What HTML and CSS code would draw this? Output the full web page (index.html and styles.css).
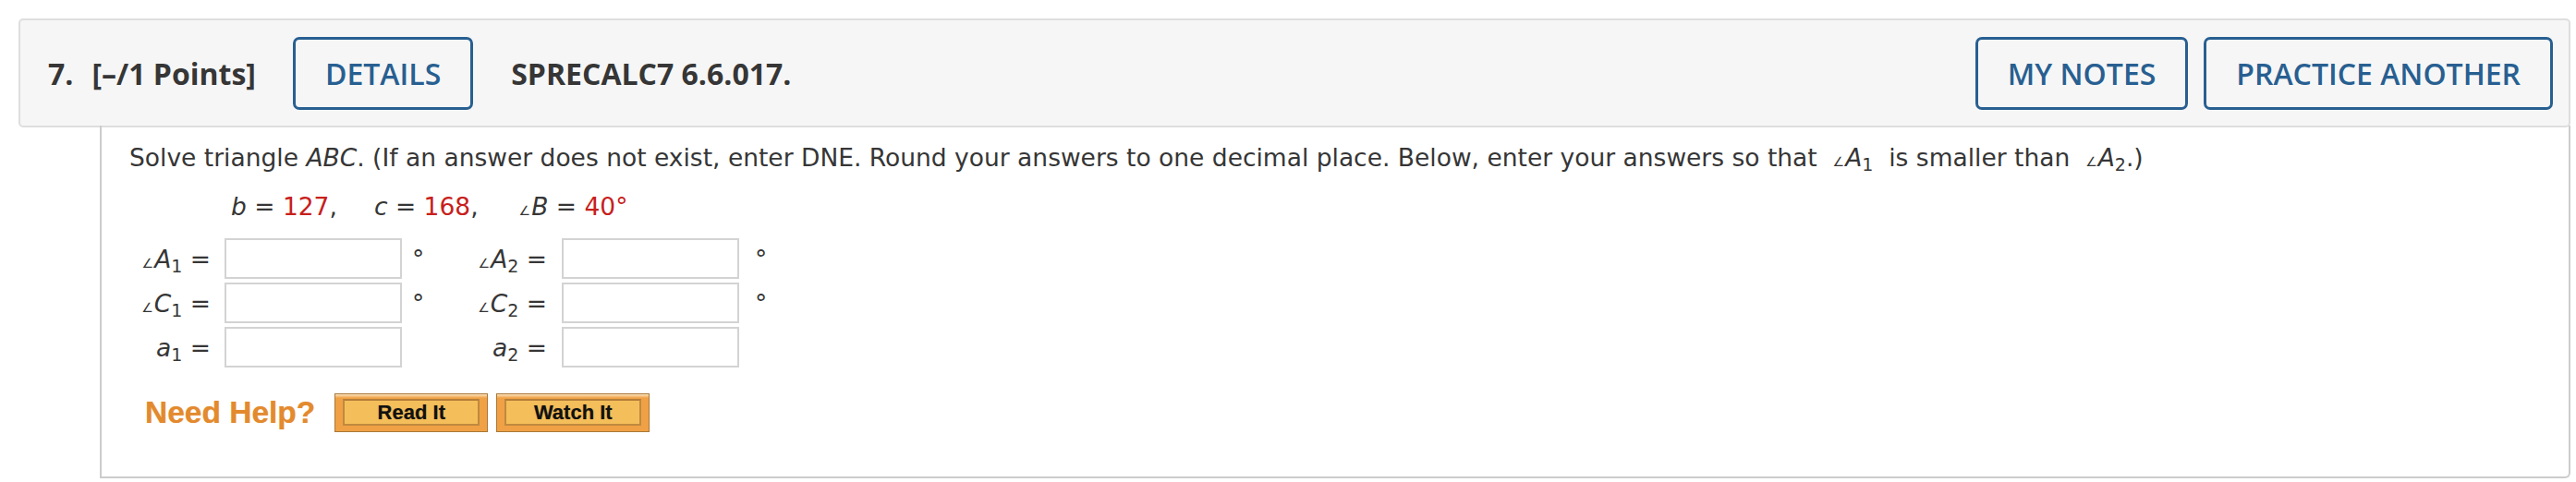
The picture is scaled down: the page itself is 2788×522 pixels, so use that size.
FILE: index.html
```html
<!DOCTYPE html>
<html lang="en">
<head>
<meta charset="utf-8">
<title>Question 7</title>
<link rel="stylesheet" href="styles.css">
</head>
<body>
<div class="question">
  <div class="qhead">
    <span class="qnum">7.</span>
    <span class="qpts">[–/1 Points]</span>
    <button class="hbtn details">DETAILS</button>
    <span class="qref">SPRECALC7 6.6.017.</span>
    <span class="spacer"></span>
    <button class="hbtn">MY NOTES</button>
    <button class="hbtn">PRACTICE ANOTHER</button>
  </div>
  <div class="qbody">
    <p class="prompt">Solve triangle <i>ABC</i>. (If an answer does not exist, enter DNE. Round your answers to one decimal place. Below, enter your answers so that &nbsp;<span class="ang">∠</span><i>A</i><sub>1</sub>&nbsp; is smaller than &nbsp;<span class="ang">∠</span><i>A</i><sub>2</sub>.)</p>
    <p class="given"><i>b</i> = <span class="val">127</span>,<span class="gap g1"></span><i>c</i> = <span class="val">168</span>,<span class="gap g2"></span><span class="ang">∠</span><i>B</i> = <span class="val">40°</span></p>
    <div class="answers">
      <span class="lbl l1"><span class="ang">∠</span><i>A</i><sub>1</sub> =</span>
      <input class="ans" type="text">
      <span class="deg d1">°</span>
      <span class="lbl l2"><span class="ang">∠</span><i>A</i><sub>2</sub> =</span>
      <input class="ans" type="text">
      <span class="deg d2">°</span>

      <span class="lbl l1"><span class="ang">∠</span><i>C</i><sub>1</sub> =</span>
      <input class="ans" type="text">
      <span class="deg d1">°</span>
      <span class="lbl l2"><span class="ang">∠</span><i>C</i><sub>2</sub> =</span>
      <input class="ans" type="text">
      <span class="deg d2">°</span>

      <span class="lbl l1"><i>a</i><sub>1</sub> =</span>
      <input class="ans" type="text">
      <span class="deg d1"></span>
      <span class="lbl l2"><i>a</i><sub>2</sub> =</span>
      <input class="ans" type="text">
      <span class="deg d2"></span>
    </div>
    <div class="help">
      <span class="needhelp">Need Help?</span>
      <button class="hlp"><span class="hlp-in">Read It</span></button>
      <button class="hlp"><span class="hlp-in">Watch It</span></button>
    </div>
  </div>
</div>
</body>
</html>
```

FILE: styles.css
```css
html, body {
  margin: 0;
  padding: 0;
  background: #ffffff;
}

body {
  padding: 20px 6px 0 20px;
}

.question {
  width: 2762px;
}

.qhead {
  display: flex;
  align-items: center;
  height: 114px;
  padding: 0 17px 0 30px;
  background: #f6f6f6;
  border: 2px solid #dedede;
  border-radius: 5px;
  font-family: "Open Sans", "Liberation Sans", sans-serif;
  font-size: 32px;
  color: #363636;
}

.qnum {
  font-weight: 700;
}

.qpts {
  font-weight: 700;
  margin-left: 20px;
}

.qref {
  font-weight: 700;
  margin-left: 41px;
}

.spacer {
  flex: 1;
}

.hbtn {
  height: 79px;
  padding: 0 32px;
  border: 3px solid #285f91;
  border-radius: 7px;
  background: transparent;
  font-family: "Open Sans", "Liberation Sans", sans-serif;
  font-size: 32px;
  font-weight: 600;
  color: #285f91;
  margin-left: 17px;
}

.hbtn.details {
  margin-left: 40px;
}

.qbody {
  margin-left: 88px;
  margin-top: -2px;
  padding: 0 0 48px 30px;
  border-left: 2px solid #cccccc;
  border-right: 2px solid #cccccc;
  border-bottom: 2px solid #cccccc;
  border-bottom-right-radius: 6px;
  font-family: "DejaVu Sans", Verdana, sans-serif;
  font-size: 26.5px;
  color: #363636;
}

.qbody p {
  margin: 0;
  line-height: 35px;
}

.prompt {
  padding-top: 17px;
}

.qbody .given {
  margin-top: 18px;
  padding-left: 110px;
}

.gap {
  display: inline-block;
  width: 0;
}

.gap.g1 {
  width: 40px;
}

.gap.g2 {
  width: 44px;
}

.val {
  color: #c7201b;
}

.ang {
  font-size: 14px;
  line-height: 1;
  font-style: normal;
  margin-right: 1px;
}

sub {
  font-size: 19px;
  vertical-align: -5px;
  line-height: 0;
}

.answers {
  display: grid;
  grid-template-columns: 103px 192px 60px 113px 192px 40px;
  grid-auto-rows: 44px;
  row-gap: 4px;
  align-items: center;
  margin-top: 17px;
  line-height: 31px;
}

.lbl {
  text-align: right;
  padding-right: 15px;
  white-space: nowrap;
}

.lbl.l2 {
  padding-right: 16px;
}

.ans {
  box-sizing: border-box;
  width: 192px;
  height: 44px;
  margin: 0;
  border: 2px solid #d3d3d3;
  background: #ffffff;
}

.deg.d1 {
  padding-left: 11px;
}

.deg.d2 {
  padding-left: 17px;
}

.help {
  display: flex;
  align-items: center;
  margin-top: 28px;
  padding-left: 17px;
}

.needhelp {
  font-family: "Liberation Sans", Arial, sans-serif;
  font-weight: 700;
  font-size: 33.5px;
  color: #e38a2f;
  text-shadow: 0 0 1px rgba(227, 138, 47, 0.6);
  margin-right: 21px;
}

.hlp {
  box-sizing: border-box;
  width: 166px;
  height: 42px;
  padding: 5px 8px 6px 8px;
  margin: 0 9px 0 0;
  border: 1px solid #a97738;
  background: linear-gradient(to bottom, #fbe3c0 0, #f0a145 4px, #f0a145 100%);
  display: flex;
}

.hlp-in {
  flex: 1;
  display: flex;
  align-items: center;
  justify-content: center;
  border: 2px solid #c0893e;
  border-top-color: #b47d3a;
  background: #f4be5b;
  font-family: "Liberation Sans", Arial, sans-serif;
  font-weight: 700;
  font-size: 22px;
  color: #111111;
  text-shadow: 0 0 1px rgba(0, 0, 0, 0.4);
}
```
